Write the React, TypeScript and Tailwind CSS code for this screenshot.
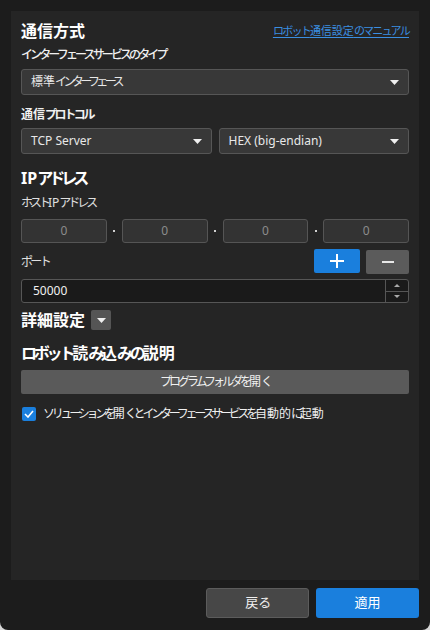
import React from "react";

const font = "font-['Noto_Sans','Noto_Sans_CJK_JP',sans-serif]";

function J({ t, k = "tracking-[-0.25em]" }: { t: string; k?: string }) {
  const parts = t.split(/([\u3040-\u30FF]+)/);
  return (
    <>
      {parts.map((p, i) =>
        /[\u3040-\u30FF]/.test(p) ? (
          <span key={i} className={k}>
            {p}
          </span>
        ) : (
          <React.Fragment key={i}>{p}</React.Fragment>
        )
      )}
    </>
  );
}

function Caret() {
  return (
    <svg width="9" height="5" viewBox="0 0 9 5" className="shrink-0">
      <path d="M0 0 L9 0 L4.5 5 Z" fill="#f0f0f0" />
    </svg>
  );
}

function Select({ children, className = "" }: { children: React.ReactNode; className?: string }) {
  return (
    <div
      className={`flex h-[26px] items-center justify-between rounded-[3px] border border-[#565656] bg-[#383838] pl-[9px] pr-[9px] text-[12px] text-[#e8e8e8] ${className}`}
    >
      <span>{children}</span>
      <Caret />
    </div>
  );
}

function IpBox() {
  return (
    <div className="flex h-[24px] flex-1 items-center justify-center rounded-[3px] border border-[#555] bg-[#333333] text-[12px] text-[#8c8c8c]">
      0
    </div>
  );
}

function Dot() {
  return <div className="flex w-[15px] shrink-0 items-center justify-center"><div className="h-[2px] w-[2px] bg-[#d0d0d0]" /></div>;
}

export default function App() {
  return (
    <div className="h-[630px] w-[430px] bg-[#d8d8d8]">
      <div className={`flex h-[630px] w-[430px] flex-col rounded-b-[8px] bg-[#1c1c1c] ${font}`}>
        <div className="mx-[11px] mt-[11px] h-[569px] bg-[#252525] px-[10px] pt-[9px]">
          <div className="flex h-[22px] items-center justify-between">
            <span className="text-[16px] font-bold leading-[22px] text-white">通信方式</span>
            <a className="text-[11px] text-[#3b8fe2] underline underline-offset-2"><J t="ロボット通信設定のマニュアル" k="tracking-[-0.16em]" /></a>
          </div>
          <div className="mt-[4px] text-[12px] font-medium leading-[18px] text-[#f0f0f0]"><J t="インターフェースサービスのタイプ" k="tracking-[-0.24em]" /></div>
          <Select className="mt-[5px]"><J t="標準インターフェース" k="tracking-[-0.3em]" /></Select>
          <div className="mt-[11px] text-[12px] font-bold leading-[18px] text-[#f0f0f0]"><J t="通信プロトコル" k="tracking-[-0.2em]" /></div>
          <div className="mt-[4px] flex gap-[7px]">
            <Select className="flex-1">TCP Server</Select>
            <Select className="flex-1">HEX (big-endian)</Select>
          </div>
          <div className="mt-[13px] text-[16px] font-bold leading-[22px] text-white"><J t="IPアドレス" /></div>
          <div className="mt-[5px] text-[12px] leading-[18px] text-[#e0e0e0]"><J t="ホストIPアドレス" /></div>
          <div className="mt-[7px] flex">
            <IpBox />
            <Dot />
            <IpBox />
            <Dot />
            <IpBox />
            <Dot />
            <IpBox />
          </div>
          <div className="mt-[6px] flex h-[25px] items-center justify-between">
            <span className="text-[12px] leading-[18px] text-[#e0e0e0]"><J t="ポート" k="tracking-[-0.22em]" /></span>
            <div className="flex gap-[6px]">
              <button className="flex h-[24px] w-[46px] items-center justify-center rounded-[2px] bg-[#1a7fdd]">
                <svg width="14" height="14" viewBox="0 0 14 14"><path d="M7 0v14M0 7h14" stroke="#fff" strokeWidth="2" /></svg>
              </button>
              <button className="mt-[1px] flex h-[24px] w-[43px] items-center justify-center rounded-[2px] bg-[#5b5b5b]">
                <svg width="12" height="2" viewBox="0 0 12 2"><path d="M0 1h12" stroke="#e8e8e8" strokeWidth="2" /></svg>
              </button>
            </div>
          </div>
          <div className="mt-[5px] flex h-[24px] rounded-[3px] border border-[#565656] bg-[#1a1a1a]">
            <div className="flex flex-1 items-center pl-[11px] text-[12px] text-[#f0f0f0]">50000</div>
            <div className="flex w-[23px] flex-col border-l border-[#565656]">
              <div className="flex flex-1 items-center justify-center border-b border-[#565656]">
                <svg width="6" height="3" viewBox="0 0 6 3"><path d="M0 3L3 0L6 3Z" fill="#aaa" /></svg>
              </div>
              <div className="flex flex-1 items-center justify-center">
                <svg width="6" height="3" viewBox="0 0 6 3"><path d="M0 0L3 3L6 0Z" fill="#aaa" /></svg>
              </div>
            </div>
          </div>
          <div className="mt-[7px] flex h-[20px] items-center gap-[6px]">
            <span className="text-[16px] font-bold leading-[22px] text-white">詳細設定</span>
            <div className="flex h-[20px] w-[20px] items-center justify-center rounded-[2px] bg-[#555555]">
              <svg width="9" height="5" viewBox="0 0 9 5"><path d="M0 0 L9 0 L4.5 5 Z" fill="#f0f0f0" /></svg>
            </div>
          </div>
          <div className="mt-[12px] text-[16px] font-bold leading-[22px] text-white"><J t="ロボット読み込みの説明" k="tracking-[-0.2em]" /></div>
          <button className="mt-[6px] flex h-[24px] w-full items-center justify-center rounded-[2px] bg-[#5a5a5a] text-[12px] text-[#f0f0f0]">
            <J t="プログラムフォルダを開く" />
          </button>
          <div className="mt-[11px] flex items-center gap-[7px] pl-[1px]">
            <div className="flex h-[14px] w-[14px] items-center justify-center rounded-[2px] bg-[#1a7fdd]">
              <svg width="10" height="8" viewBox="0 0 10 8"><path d="M1 4l3 3l5-6" stroke="#fff" strokeWidth="1.6" fill="none" /></svg>
            </div>
            <span className="text-[12px] leading-[18px] text-[#f0f0f0]"><J t="ソリューションを開くとインターフェースサービスを自動的に起動" k="tracking-[-0.27em]" /></span>
          </div>
        </div>
        <div className="mr-[11px] mt-[8px] flex justify-end gap-[7px]">
          <button className="h-[30px] w-[103px] rounded-[3px] border border-[#5c5c5c] bg-[#474747] text-[13px] text-[#f0f0f0]">戻<span className="tracking-[-0.1em]">る</span></button>
          <button className="h-[30px] w-[103px] rounded-[3px] bg-[#1a7fdd] text-[13px] text-white">適用</button>
        </div>
      </div>
    </div>
  );
}
